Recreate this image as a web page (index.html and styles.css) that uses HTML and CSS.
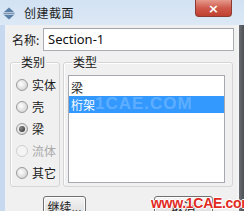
FILE: index.html
```html
<!DOCTYPE html>
<html>
<head>
<meta charset="utf-8">
<link rel="stylesheet" href="styles.css">
</head>
<body>
<div class="window">
  <div class="titlebar">
    <svg class="appicon" width="12" height="13" viewBox="0 0 12 13">
      <path d="M6 0.5 L11 5 L1 5 Z" fill="#5a7fa8"/>
      <rect x="0.5" y="5.6" width="11" height="1.8" fill="#7d97b5"/>
      <path d="M6 12.5 L11 8 L1 8 Z" fill="#5a7fa8"/>
    </svg>
    <span class="title">创建截面</span>
    <div class="close"><span>×</span></div>
  </div>
  <div class="frame">
    <div class="edge-left"></div>
    <div class="body">
      <div class="name-row">
        <span class="name-label">名称:</span>
        <div class="input">Section-1</div>
      </div>
      <div class="groups">
        <div class="group group-cat">
          <div class="legend">类别</div>
          <div class="radios">
            <div class="radio-row"><span class="radio"></span><span>实体</span></div>
            <div class="radio-row"><span class="radio"></span><span>壳</span></div>
            <div class="radio-row"><span class="radio checked"></span><span>梁</span></div>
            <div class="radio-row disabled"><span class="radio"></span><span>流体</span></div>
            <div class="radio-row"><span class="radio"></span><span>其它</span></div>
          </div>
        </div>
        <div class="group group-type">
          <div class="legend">类型</div>
          <div class="listbox">
            <div class="item">梁</div>
            <div class="item selected">桁架<span class="faint">1CAE.COM</span></div>
          </div>
        </div>
      </div>
      <div class="buttons">
        <div class="btn btn-continue">继续...</div>
        <div class="btn btn-cancel">取消</div>
      </div>
      <div class="watermark">www.1CAE.com</div>
    </div>
    <div class="edge-right"></div>
  </div>
</div>
</body>
</html>
```
FILE: styles.css
```css
html, body {
  margin: 0;
  padding: 0;
  overflow: hidden;
}
body {
  width: 244px;
  height: 211px;
  font-family: "Noto Sans CJK SC", "Noto Sans", sans-serif;
  font-size: 12px;
  color: #1a1a1a;
}
.window {
  width: 244px;
  height: 211px;
  display: flex;
  flex-direction: column;
  background: #c9dbef;
}
.titlebar {
  height: 25px;
  flex: none;
  display: flex;
  align-items: center;
  background: linear-gradient(#d2e2f3, #dce8f5);
  position: relative;
}
.appicon {
  margin-left: 3px;
  margin-top: 1px;
}
.title {
  margin-left: 9px;
  font-size: 12px;
  line-height: 14px;
  color: #1e1e1e;
  letter-spacing: 0.5px;
}
.close {
  position: absolute;
  left: 195px;
  top: 0;
  width: 37px;
  height: 17px;
  box-sizing: border-box;
  border: 1px solid #8d3b32;
  border-top: none;
  border-radius: 0 0 4px 4px;
  background: linear-gradient(#e59a8c, #cf5a4c 50%, #c0402f);
  display: flex;
  align-items: center;
  justify-content: center;
  color: #fff;
  font-family: "DejaVu Sans", sans-serif;
  font-size: 13px;
  font-weight: bold;
  line-height: 13px;
}
.frame {
  flex: 1;
  display: flex;
  min-height: 0;
}
.edge-left {
  width: 5px;
  background: #c7d9ee;
  border-right: 1px solid #eef2f7;
}
.edge-right {
  width: 7px;
  background: linear-gradient(90deg, #f4f4f4 0, #f4f4f4 2px, #6b6e73 2px, #4c4f53 100%);
}
.body {
  flex: 1;
  background: #f0f0f0;
  padding: 3px 0 0 4px;
  position: relative;
  line-height: 14px;
}
.name-row {
  display: flex;
  align-items: center;
  height: 23px;
}
.name-label {
  margin-left: 2px;
  width: 31px;
  font-size: 12px;
}
.input {
  width: 191px;
  height: 23px;
  box-sizing: border-box;
  border: 1px solid #abadb3;
  border-top-color: #a0a3a9;
  background: #fff;
  padding-left: 4px;
  font-family: "Noto Sans", sans-serif;
  font-size: 13px;
  line-height: 20px;
  color: #111;
}
.groups {
  display: flex;
  gap: 3px;
  margin-top: 11px;
}
.group {
  height: 125px;
  box-sizing: border-box;
  border: 1px solid #d5d5d5;
  border-radius: 3px;
  box-shadow: inset 1px 1px 0 #fff;
}
.group-cat {
  width: 50px;
}
.group-type {
  width: 170px;
}
.legend {
  display: block;
  width: fit-content;
  height: 14px;
  margin-top: -8px;
  line-height: 14px;
  background: #f0f0f0;
  padding: 0 1px;
}
.group-cat .legend {
  margin-left: 9px;
}
.group-type .legend {
  margin-left: 8px;
}
.radios {
  margin-top: 5px;
  padding-left: 5px;
  display: flex;
  flex-direction: column;
}
.radio-row {
  height: 22px;
  display: flex;
  align-items: center;
  gap: 4px;
}
.radio {
  width: 12px;
  height: 12px;
  box-sizing: border-box;
  border-radius: 50%;
  border: 1px solid #9a9a9a;
  background: radial-gradient(circle at 40% 40%, #ffffff 0, #e6e6e6 45%, #c8c8c8 100%);
  position: relative;
}
.radio.checked::after {
  content: "";
  position: absolute;
  left: 2px;
  top: 2px;
  width: 6px;
  height: 6px;
  border-radius: 50%;
  background: radial-gradient(circle at 35% 35%, #8a8a8a, #2a2a2a);
}
.radio-row.disabled {
  color: #a9a9a9;
}
.radio-row.disabled .radio {
  border-color: #cfcfcf;
  background: #f4f4f4;
}
.listbox {
  margin: 6px 0 0 4px;
  width: 157px;
  height: 108px;
  box-sizing: border-box;
  border: 1px solid #a6a9ae;
  background: #fff;
  padding-top: 3px;
}
.item {
  height: 17px;
  line-height: 17px;
  padding-left: 2px;
  position: relative;
}
.item.selected {
  background: #3399ff;
  color: #fff;
}
.faint {
  position: absolute;
  left: 26px;
  top: -1px;
  font-family: "Liberation Sans", sans-serif;
  font-weight: bold;
  font-size: 17px;
  color: rgba(200, 225, 255, 0.3);
  letter-spacing: 1px;
}
.buttons {
  display: flex;
  margin-top: 9px;
}
.btn {
  height: 24px;
  box-sizing: border-box;
  border: 1px solid #707070;
  border-radius: 3px;
  background: linear-gradient(#f4f4f4, #e6e6e6 50%, #d8d8d8);
  box-shadow: inset 0 0 0 1px #fcfcfc;
  display: flex;
  justify-content: center;
  padding-top: 3px;
  font-size: 12px;
  line-height: 14px;
}
.btn-continue {
  margin-left: 33px;
  width: 43px;
}
.btn-cancel {
  margin-left: 68px;
  width: 59px;
}
.watermark {
  position: absolute;
  left: 145px;
  top: 170px;
  font-family: "Liberation Sans", sans-serif;
  font-weight: bold;
  font-size: 14px;
  line-height: 16px;
  color: #e02a1f;
  letter-spacing: -0.3px;
  text-shadow: 1px 0 0 #fff, -1px 0 0 #fff, 0 1px 0 #fff, 0 -1px 0 #fff;
}
```
